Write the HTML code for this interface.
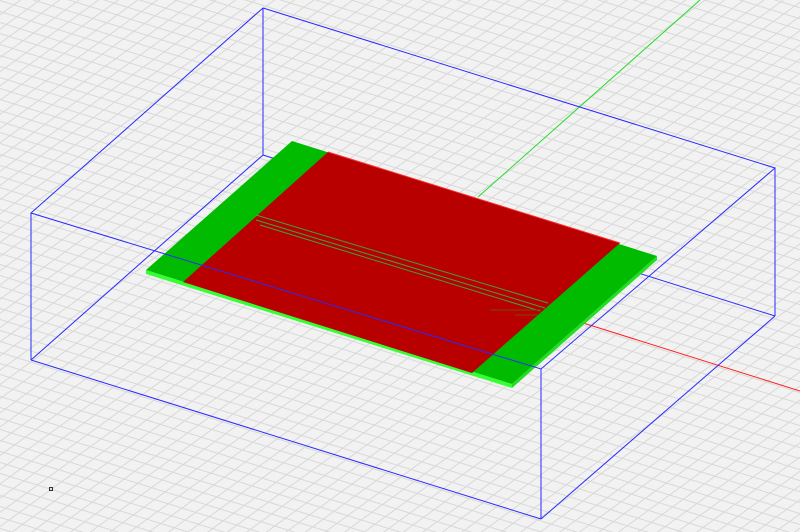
<!DOCTYPE html>
<html><head><style>html,body{margin:0;padding:0;width:800px;height:532px;overflow:hidden;background:#f2f2f2}</style></head>
<body>
<svg width="800" height="532" viewBox="0 0 800 532" xmlns="http://www.w3.org/2000/svg" style="display:block">
<defs>
<pattern id="pa" width="40" height="10.5" patternUnits="userSpaceOnUse" patternTransform="rotate(17.3)">
<rect width="40" height="1" fill="#d8d8d8"/></pattern>
<pattern id="pb" width="40" height="11.5" patternUnits="userSpaceOnUse" patternTransform="rotate(-36)">
<rect width="40" height="1" fill="#d8d8d8"/></pattern>
</defs>
<rect width="800" height="532" fill="#f2f2f2"/>
<rect x="-400" y="-400" width="1600" height="1400" fill="url(#pa)"/>
<rect x="-400" y="-400" width="1600" height="1400" fill="url(#pb)"/>
<g stroke="#2a2aff" stroke-width="1" fill="none">
<line x1="263" y1="8" x2="263" y2="155"/>
<line x1="263" y1="155" x2="31" y2="360"/>
<line x1="263" y1="155" x2="775" y2="316"/>
</g>
<line x1="478" y1="197" x2="700" y2="0" stroke="#22dd22" stroke-width="1"/>
<line x1="580" y1="322" x2="800" y2="391" stroke="#ff2020" stroke-width="1"/>
<polygon points="146,270 512,384 512,388 146,274" fill="#33ff33"/>
<polygon points="512,384 657,256 657,260 512,388" fill="#22dd22"/>
<polygon points="292,141 657,256 512,384 146,270" fill="#00bb00"/>
<polygon points="328,152 620,243 472,373 183,282" fill="#b80000"/>
<line x1="328" y1="152" x2="620" y2="243" stroke="#ff3030" stroke-width="1"/>
<g stroke="#3fa03f" stroke-width="1">
<line x1="256" y1="215" x2="548" y2="303"/>
<line x1="256" y1="220" x2="545" y2="308"/>
<line x1="260" y1="225" x2="540" y2="311"/>
</g>
<g stroke="#7a4a00" stroke-width="1">
<line x1="490" y1="310" x2="540" y2="310"/>
<line x1="515" y1="315" x2="538" y2="315"/>
</g>
<g stroke="#2a2aff" stroke-width="1" fill="none">
<polygon points="263,8 775,168 541,369 31,213"/>
<line x1="31" y1="213" x2="31" y2="360"/>
<line x1="775" y1="168" x2="775" y2="316"/>
<line x1="541" y1="369" x2="541" y2="519"/>
<line x1="31" y1="360" x2="541" y2="519"/>
<line x1="541" y1="519" x2="775" y2="316"/>
</g>
<rect x="49.5" y="487.5" width="3" height="3" fill="none" stroke="#333" stroke-width="1"/>
</svg>
</body></html>
